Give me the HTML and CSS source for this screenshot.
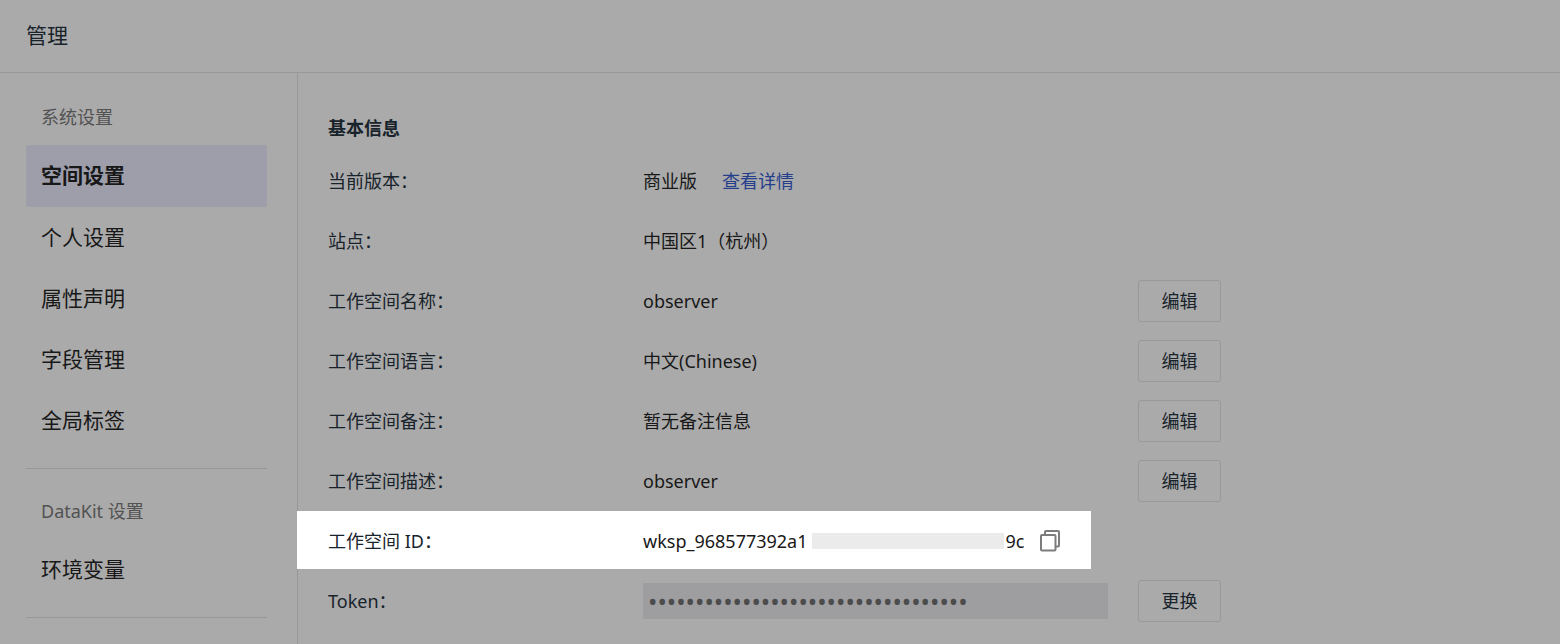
FILE: index.html
```html
<!DOCTYPE html>
<html lang="zh-CN">
<head>
<meta charset="utf-8">
<title>管理</title>
<link rel="stylesheet" href="styles.css">
</head>
<body>
<header class="header"><h1 class="header-title">管理</h1></header>
<div class="layout">
  <nav class="sidebar">
    <section class="group">
      <h2 class="group-title">系统设置</h2>
      <a class="item active" href="#">空间设置</a>
      <a class="item" href="#">个人设置</a>
      <a class="item" href="#">属性声明</a>
      <a class="item" href="#">字段管理</a>
      <a class="item" href="#">全局标签</a>
    </section>
    <section class="group">
      <h2 class="group-title">DataKit 设置</h2>
      <a class="item" href="#">环境变量</a>
    </section>
  </nav>
  <main class="content">
    <h2 class="section-title">基本信息</h2>
    <div class="row"><span class="label">当前版本：</span><div class="value">商业版<a class="link" href="#">查看详情</a></div></div>
    <div class="row"><span class="label">站点：</span><div class="value">中国区1（杭州）</div></div>
    <div class="row"><span class="label">工作空间名称：</span><div class="value">observer</div><button class="btn" type="button">编辑</button></div>
    <div class="row"><span class="label">工作空间语言：</span><div class="value">中文(Chinese)</div><button class="btn" type="button">编辑</button></div>
    <div class="row"><span class="label">工作空间备注：</span><div class="value">暂无备注信息</div><button class="btn" type="button">编辑</button></div>
    <div class="row"><span class="label">工作空间描述：</span><div class="value">observer</div><button class="btn" type="button">编辑</button></div>
    <div class="row spotlight"><span class="label">工作空间 ID：</span><div class="value">wksp_968577392a1<span class="mask"></span>9c<button class="copy" type="button" aria-label="复制"><svg width="20" height="22" viewBox="0 0 20 22" fill="none" stroke="#7c7c7c" stroke-width="2" stroke-linejoin="round"><path d="M5 4.500V2Q5 1 6 1H18Q19 1 19 2V15.500Q19 16.500 18 16.500H16"/><rect x="1" y="5" width="14.500" height="15.500" rx="1"/></svg></button></div></div>
    <div class="row"><label class="label" for="token">Token：</label><input class="token" id="token" type="password" readonly value="0000000000000000000000000000000000"><button class="btn" type="button">更换</button></div>
  </main>
</div>
</body>
</html>
```
FILE: styles.css
```css
* { box-sizing: border-box; }

body {
  margin: 0;
  min-height: 100vh;
  display: flex;
  flex-direction: column;
  background: #aaaaaa;
  color: #181818;
  font: 18px/24px "Noto Sans", "Noto Sans CJK SC", sans-serif;
}

h1, h2 { margin: 0; }

.header {
  padding: 19px 26px 21px;
  border-bottom: 1px solid #98989a;
}

.header-title {
  font-size: 21px;
  line-height: 32px;
  font-weight: 400;
  color: #18232b;
}

.layout {
  flex: 1;
  display: grid;
  grid-template-columns: 298px 1fr;
}

.sidebar {
  padding: 2px 30px 0 26px;
  border-right: 1px solid #98989a;
}

.group {
  padding: 30px 0 17px;
  border-bottom: 1px solid #96969b;
}

.group-title {
  padding: 0 15px 16px;
  font-size: 18px;
  font-weight: 400;
  color: #525252;
}

.item {
  display: flex;
  align-items: center;
  height: 61px;
  padding: 0 15px 1px;
  border-radius: 2px;
  font-size: 21px;
  line-height: 32px;
  color: #181818;
  text-decoration: none;
}

.active {
  height: 62px;
  padding-bottom: 2px;
  background: #9d9eaa;
  font-weight: 600;
}

.content { padding: 43px 30px 0; }

.section-title {
  padding-bottom: 11px;
  font-size: 18px;
  font-weight: 600;
  color: #18232b;
}

.row {
  display: grid;
  grid-template-columns: 315px 465px 113px;
  align-items: center;
  height: 60px;
}

.label { color: #18232b; }

.value {
  display: flex;
  align-items: center;
}

.link {
  margin-left: 25px;
  color: #253e8c;
  text-decoration: none;
}

.btn {
  width: 83px;
  height: 42px;
  margin-left: 30px;
  padding: 0;
  border: 1px solid #98989d;
  border-radius: 3px;
  background: transparent;
  color: #18232b;
  font: inherit;
}

.spotlight {
  position: relative;
  isolation: isolate;
}

.spotlight::before {
  content: "";
  position: absolute;
  z-index: -1;
  top: 0;
  left: -31px;
  width: 794px;
  height: 58px;
  background: #ffffff;
}

.mask {
  width: 192px;
  height: 16px;
  margin: 0 2px 0 4px;
  background: #ebebeb;
}

.copy {
  display: flex;
  margin-left: 16px;
  padding: 0;
  border: 0;
  background: transparent;
}

.token {
  width: 100%;
  height: 36px;
  padding: 0 5px;
  border: 0;
  border-radius: 0;
  background: #9e9ea0;
  color: #4c4c4c;
  font: 25px/36px "Noto Sans", sans-serif;
}
```
